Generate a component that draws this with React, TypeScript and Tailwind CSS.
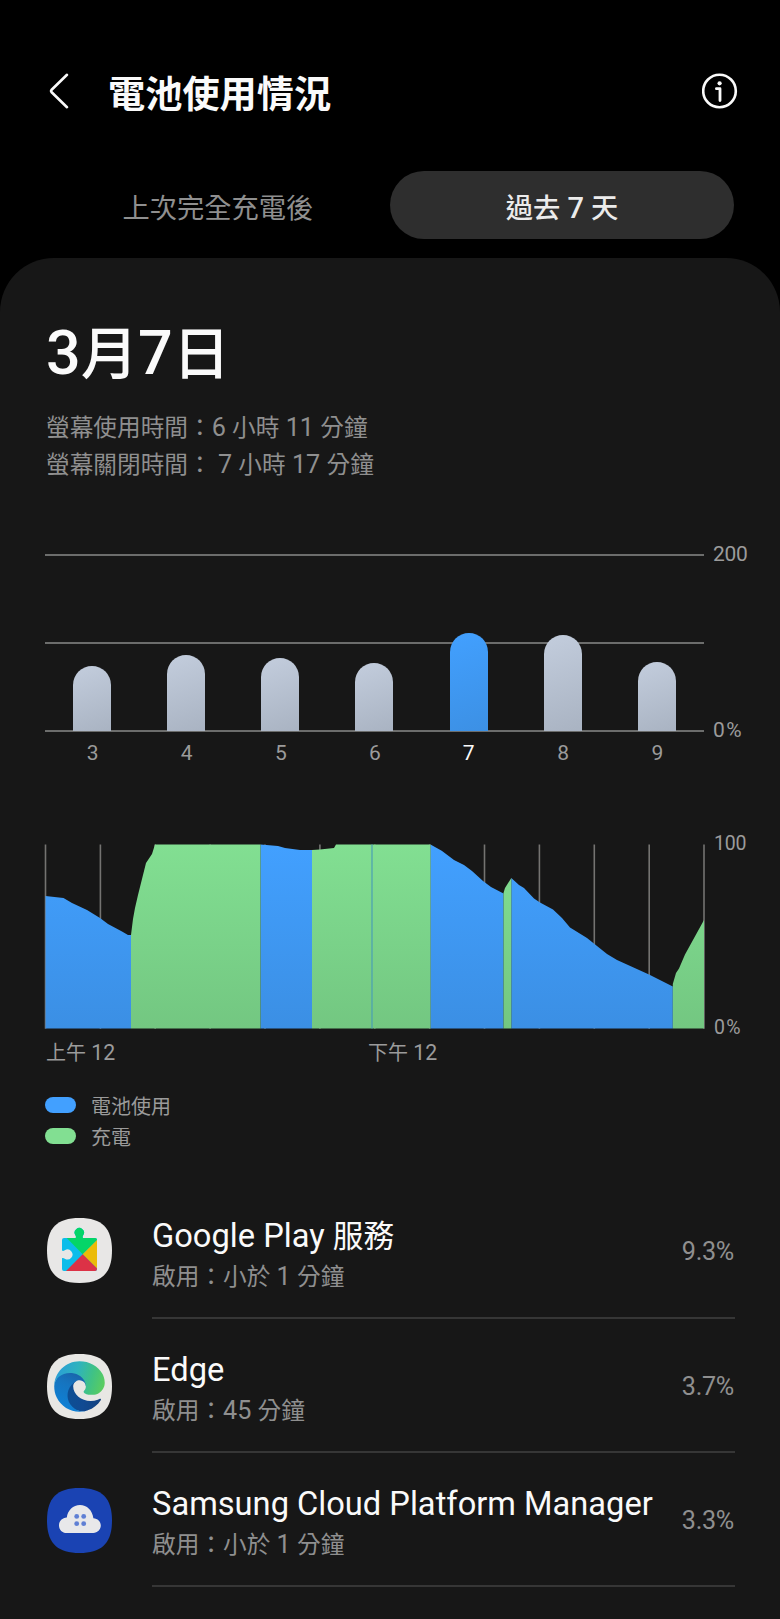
import React from "react";

type Day = { label: string; height: number; active?: boolean };

const days: Day[] = [
  { label: "3", height: 65 },
  { label: "4", height: 76 },
  { label: "5", height: 73 },
  { label: "6", height: 68 },
  { label: "7", height: 98.5, active: true },
  { label: "8", height: 96.5 },
  { label: "9", height: 69.5 },
];

const SQUIRCLE =
  "M32.5 0C55 0 65 10 65 32.5S55 65 32.5 65 0 55 0 32.5 10 0 32.5 0Z";

/* Sets runs of Han characters slightly smaller than the Latin text and digits beside them. */
function Mixed({ text }: { text: string }) {
  return (
    <>
      {text.split(/([\u3000-\u9fff\uff00-\uffef]+)/).map((run, i) =>
        i % 2 ? (
          <span key={i} className="text-[0.94em] leading-[0]">
            {run}
          </span>
        ) : (
          run
        )
      )}
    </>
  );
}

function PlayServicesIcon() {
  return (
    <svg width="65" height="65" viewBox="0 0 65 65">
      <defs>
        <clipPath id="puzzle">
          <path d="M17 20H28.6C29.3 19 28.9 18.3 28.4 17.3A4.7 4.7 0 1 1 36.2 17.3C35.7 18.3 35.3 19 36 20H48Q50 20 50 22V51Q50 53 48 53H17Q15 53 15 51V40.2C16 39.6 16.7 40 17.8 40.7A5 5 0 1 0 17.8 32.2C16.7 32.9 16 33.2 15 32.6V22Q15 20 17 20Z" />
        </clipPath>
      </defs>
      <path d={SQUIRCLE} fill="#e8e7e6" />
      <g clipPath="url(#puzzle)">
        <rect x="14" y="5" width="37" height="49" fill="#0cbdea" />
        <path d="M19 19.3L35.7 36.3L53 19V5H19Z" fill="#04d568" />
        <path d="M52 20L35.7 36.3L52 52.6Z" fill="#ebbb08" />
        <path d="M18 54L35.7 36.3L53.4 54Z" fill="#dc3246" />
      </g>
    </svg>
  );
}

function EdgeIcon() {
  return (
    <svg width="65" height="65" viewBox="0 0 65 65">
      <defs>
        <linearGradient id="edgeDark" x1="60" y1="170" x2="240" y2="190" gradientUnits="userSpaceOnUse">
          <stop offset="0" stopColor="#0c4f94" />
          <stop offset="0.5" stopColor="#104a92" />
          <stop offset="1" stopColor="#14427f" />
        </linearGradient>
        <linearGradient id="edgeBlue" x1="130" y1="60" x2="50" y2="230" gradientUnits="userSpaceOnUse">
          <stop offset="0" stopColor="#1a62a8" />
          <stop offset="0.4" stopColor="#1674bf" />
          <stop offset="1" stopColor="#0f80d4" />
        </linearGradient>
        <linearGradient id="edgeGreen" x1="10" y1="60" x2="250" y2="130" gradientUnits="userSpaceOnUse">
          <stop offset="0" stopColor="#2a9fd6" />
          <stop offset="0.4" stopColor="#2fb3bd" />
          <stop offset="0.72" stopColor="#40c284" />
          <stop offset="1" stopColor="#5bcd5e" />
        </linearGradient>
      </defs>
      <path d={SQUIRCLE} fill="#e8e7e4" />
      <g transform="translate(7.2 7.2) scale(0.1975)">
        <path
          fill="url(#edgeDark)"
          d="M231 190.5c-3.4 1.8-6.9 3.4-10.5 4.7a101.7 101.7 0 0 1-35.9 6.4c-47.3 0-88.5-32.5-88.5-74.3.1-11.4 6.4-21.9 16.4-27.3-42.8 1.8-53.8 46.4-53.8 72.5 0 73.9 68.1 81.4 82.8 81.4 7.9 0 19.8-2.3 27-4.6l1.3-.4c27.6-9.5 51-28.1 66.6-52.8 1.2-1.9.6-4.3-1.2-5.5-1.3-.8-2.9-.9-4.2-.1Z"
        />
        <path
          fill="url(#edgeBlue)"
          d="M105.7 241.4c-8.9-5.5-16.6-12.8-22.7-21.3-26.3-36-18.4-86.5 17.6-112.8 3.8-2.7 7.7-5.2 11.9-7.2 3.1-1.5 8.4-4.1 15.5-4 10.1.1 19.6 4.9 25.7 13 4 5.4 6.3 11.9 6.4 18.7 0-.2 24.5-79.6-80-79.6-43.9 0-80 41.7-80 78.2-.2 19.3 4 38.5 12.1 56 27.6 58.8 94.8 87.6 156.4 67.1-21.1 6.6-44.1 3.7-62.9-8.1Z"
        />
        <path
          fill="url(#edgeGreen)"
          d="M152.3 148.9c-.9 1-3.4 2.5-3.4 5.6 0 2.6 1.7 5.2 4.8 7.3 14.3 10 41.4 8.6 41.5 8.6 10.7 0 21.1-2.9 30.3-8.3 18.8-11 30.4-31.1 30.4-52.9.3-22.4-8-37.3-11.3-43.9C223.5 23.9 177.7 0 128 0 58 0 1 56.2 0 126.2c.5-36.5 36.8-66 80-66 3.5 0 23.5.3 42 10.1 16.3 8.6 24.9 18.9 30.8 29.2 6.2 10.7 7.3 24.1 7.3 29.5s-2.7 13.3-7.8 19.9Z"
        />
      </g>
    </svg>
  );
}

function CloudIcon() {
  return (
    <svg width="65" height="65" viewBox="0 0 65 65">
      <path d={SQUIRCLE} fill="#1a43b3" />
      <path
        d="M19.8 29.6C20.6 22.4 26.2 17 33 17S45.6 22.4 46.4 30.3C50.6 30.5 53.8 33.6 53.8 37.6S50.5 45 46.3 45H19.6C15.3 45 12 41.7 12 37.4S15.4 29.8 19.8 29.6Z"
        fill="#e8e8ea"
      />
      <g fill="#5f7fd4">
        <circle cx="29.7" cy="28.4" r="2.4" />
        <circle cx="36.7" cy="28.4" r="2.4" />
        <circle cx="29.7" cy="35.7" r="2.4" />
        <circle cx="36.7" cy="35.7" r="2.4" />
      </g>
    </svg>
  );
}

const apps = [
  { name: "Google Play 服務", active: "啟用：小於 1 分鐘", percent: "9.3%", icon: <PlayServicesIcon /> },
  { name: "Edge", active: "啟用：45 分鐘", percent: "3.7%", icon: <EdgeIcon /> },
  { name: "Samsung Cloud Platform Manager", active: "啟用：小於 1 分鐘", percent: "3.3%", icon: <CloudIcon /> },
];

function DailyChart() {
  return (
    <section className="mt-[71px] flex pl-[45px]">
      <div className="w-[659px]">
        <div className="relative h-[178px]">
          <div className="absolute inset-0 flex flex-col justify-between">
            <div className="h-[2px] bg-[#6c6d6c]" />
            <div className="h-[2px] bg-[#6c6d6c]" />
            <div className="h-[2px] bg-[#6c6d6c]" />
          </div>
          <div className="relative grid h-[177px] grid-cols-7 items-end justify-items-center">
            {days.map((d) => (
              <div
                key={d.label}
                style={{ height: d.height }}
                className={
                  d.active
                    ? "w-[38px] rounded-t-full bg-linear-160 from-[#42a0ff] to-[#3c90e4]"
                    : "w-[38px] rounded-t-full bg-linear-160 from-[#c3cddd] to-[#a9b3c2]"
                }
              />
            ))}
          </div>
        </div>
        <div className="grid grid-cols-7 pt-[6px] text-center text-[21px] leading-[30px] text-[#9b9b9b]">
          {days.map((d) => (
            <span key={d.label} className={d.active ? "text-[#fafafa]" : "pl-px"}>
              {d.label}
            </span>
          ))}
        </div>
      </div>
      <div className="-mt-[15px] flex h-[206px] flex-col justify-between pl-[9px] text-[21px] leading-[30px] text-[#9b9b9b]">
        <span className="tracking-[-0.3px]">200</span>
        <span className="tracking-[1.5px]">0%</span>
      </div>
    </section>
  );
}

const gridX = [45.5, 100.4, 155.2, 210.1, 265, 319.9, 374.8, 429.7, 484.5, 539.4, 594.3, 649.2, 704];

function LevelChart() {
  return (
    <section className="mt-[75px]">
      <div className="flex h-[200px] pl-[44px]">
        <svg width="662" height="186" viewBox="44 843 662 186" className="shrink-0">
          <defs>
            <linearGradient id="use" x1="0" y1="844" x2="0" y2="1028" gradientUnits="userSpaceOnUse">
              <stop offset="0" stopColor="#42a0ff" />
              <stop offset="1" stopColor="#3b8fe4" />
            </linearGradient>
            <linearGradient id="charge" x1="0" y1="844" x2="0" y2="1028" gradientUnits="userSpaceOnUse">
              <stop offset="0" stopColor="#82df92" />
              <stop offset="1" stopColor="#73c781" />
            </linearGradient>
          </defs>
          {gridX.map((x) => (
            <path key={x} d={`M${x} 844.5V1028.7`} stroke="#747371" strokeWidth="1.6" />
          ))}
          <g fill="url(#use)">
            <path d="M45.5 896L63.5 898L72 903L87 910L100 918L108 924L122 931.5L128 935H131V1028.5H45.5Z" />
            <path d="M260.5 844.5L278 846L285 848L300 850H312V1028.5H260.5Z" />
            <path d="M430.5 844.5L441.7 850.7L454 860L464 865L472 871L483 881L491 887L503.5 893.5V1028.5H430.5Z" />
            <path d="M511.3 878L519 885L524 888L534 898.5L540 902.5L553 909.5L562 918L570 927.5L587 938L607 954L617 960L649 974.5L672.8 986.5V1028.5H511.3Z" />
          </g>
          <g fill="url(#charge)">
            <path d="M131 935L133 919L135 908L138 895L143 875L146 863L152 854L155 844.5H260.5V1028.5H131Z" />
            <path d="M312 850L320 849.5L334 848L336 844.5H430.5V1028.5H312Z" />
            <path d="M503.5 893L505 888L511.3 878V1028.5H503.5Z" />
            <path d="M672.8 984L676 973L679 968.5L685 954.5L704 920V1028.5H672.8Z" />
          </g>
          <path d="M372 844.5V1028.5" stroke="#4a9fb4" strokeWidth="1.2" />
        </svg>
        <div className="-mt-[13px] flex h-[212px] flex-col justify-between pl-[8px] text-[19.5px] leading-[28px] text-[#9b9b9b]">
          <span className="tracking-[-0.2px]">100</span>
          <span className="tracking-[1.3px]">0%</span>
        </div>
      </div>
      <div className="-mt-[5px] flex pl-[46px] text-[21.3px] leading-[30px] text-[#9b9b9b]">
        <span className="w-[322px]">
          <Mixed text="上午 12" />
        </span>
        <span>
          <Mixed text="下午 12" />
        </span>
      </div>
    </section>
  );
}

export default function App() {
  return (
    <div className="flex h-[1619px] w-[780px] flex-col overflow-hidden bg-black font-['Roboto','Noto_Sans_CJK_TC',sans-serif]">
      <header className="flex h-[171px] shrink-0 items-start pt-[68px] pr-[42px] pl-[46px]">
        <svg width="26" height="46" viewBox="0 0 26 46" fill="none" className="shrink-0">
          <path d="M21 6.8L5.4 22Q4.6 23 5.4 24L21 39.2" stroke="#fafafa" strokeWidth="2.6" strokeLinecap="round" strokeLinejoin="round" />
        </svg>
        <h1 className="flex-1 pt-[2px] pl-[36px] text-[37.2px] leading-[50px] font-bold text-[#fafafa]">電池使用情況</h1>
        <svg width="36" height="46" viewBox="0 0 36 46" fill="none" className="shrink-0">
          <circle cx="17.5" cy="23" r="16.3" stroke="#fafafa" strokeWidth="2.6" />
          <circle cx="17.6" cy="15.3" r="2.1" fill="#fafafa" />
          <path d="M14.4 20.7H18V32.6" stroke="#fafafa" strokeWidth="2.8" strokeLinecap="round" strokeLinejoin="round" />
        </svg>
      </header>
      <nav className="flex h-[68px] shrink-0 px-[46px] text-[29px] leading-[44px]">
        <button className="flex w-[344px] items-center justify-center pt-[5px] text-[#8f8f8f]">
          <span>
            <Mixed text="上次完全充電後" />
          </span>
        </button>
        <button className="flex w-[344px] items-center justify-center rounded-full bg-[#2e2e2e] pt-[5px] font-medium text-[#ebebeb]">
          <span>
            <Mixed text="過去 7 天" />
          </span>
        </button>
      </nav>
      <main className="mt-[19px] flex flex-1 flex-col rounded-t-[54px] bg-[#171717]">
        <h2 className="pt-[55px] pl-[46px] text-[61px] leading-[80px] font-medium text-[#fafafa]">
          <Mixed text="3月7日" />
        </h2>
        <div className="mt-[16px] pl-[46px] text-[25.2px] leading-[37px] text-[#8f8f8f]">
          <p>
            <Mixed text="螢幕使用時間：6 小時 11 分鐘" />
          </p>
          <p>
            <Mixed text="螢幕關閉時間： 7 小時 17 分鐘" />
          </p>
        </div>
        <DailyChart />
        <LevelChart />
        <div className="mt-[21px] flex flex-col pl-[45px] text-[20px] leading-[31px] text-[#9b9b9b]">
          <div className="flex h-[31px] items-center gap-[15px]">
            <span className="h-[16px] w-[31px] rounded-full bg-[#42a0ff]" />
            <span className="pt-[5px] leading-[28px]">電池使用</span>
          </div>
          <div className="flex h-[31px] items-center gap-[15px]">
            <span className="h-[16px] w-[31px] rounded-full bg-[#82df92]" />
            <span className="pt-[5px] leading-[28px]">充電</span>
          </div>
        </div>
        <ul className="mt-[34px] pr-[45px] pl-[47px]">
          {apps.map((a, i) => (
            <li key={a.name} className="flex h-[134px]">
              <div className={i === 0 ? "flex w-[105px] items-center pb-[3px]" : "flex w-[105px] items-center"}>{a.icon}</div>
              <div className="flex flex-1 items-center border-b-2 border-[#363636]">
                <div className="h-full w-[520px] pt-[29px]">
                  <p className="text-[32.65px] leading-[44px] whitespace-nowrap text-[#fafafa]">
                    <Mixed text={a.name} />
                  </p>
                  <p className="pt-px text-[25.2px] leading-[36px] text-[#8f8f8f]">
                    <Mixed text={a.active} />
                  </p>
                </div>
                <span
                  className={
                    i === 0
                      ? "flex-1 pt-px pr-px text-right text-[25.2px] tracking-[-0.3px] text-[#8f8f8f]"
                      : "flex-1 pt-[3px] pr-px text-right text-[25.2px] tracking-[-0.3px] text-[#8f8f8f]"
                  }
                >
                  {a.percent}
                </span>
              </div>
            </li>
          ))}
        </ul>
      </main>
    </div>
  );
}
